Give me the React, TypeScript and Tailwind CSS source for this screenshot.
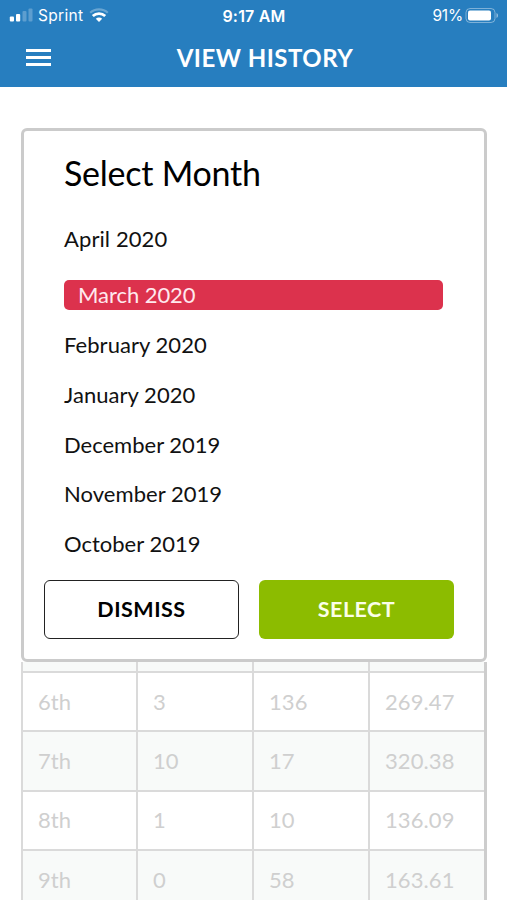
import { useState } from 'react';

type Month = {
  label: string;
  tracking: string;
};

const months: Month[] = [
  { label: 'April 2020', tracking: 'tracking-[0.1px]' },
  { label: 'March 2020', tracking: 'tracking-[-0.05px]' },
  { label: 'February 2020', tracking: 'tracking-[0.05px]' },
  { label: 'January 2020', tracking: 'tracking-[0.05px]' },
  { label: 'December 2019', tracking: 'tracking-[0px]' },
  { label: 'November 2019', tracking: 'tracking-[0.05px]' },
  { label: 'October 2019', tracking: 'tracking-[0px]' },
];

const rows = [
  ['6th', '3', '136', '269.47'],
  ['7th', '10', '17', '320.38'],
  ['8th', '1', '10', '136.09'],
  ['9th', '0', '58', '163.61'],
];

function StatusBar() {
  return (
    <div className="grid h-[31px] grid-cols-3 items-center pr-[8px] pl-[9px] font-['Inter',sans-serif] text-[15.5px] leading-none text-white">
      <div className="flex items-center">
        <svg width="25" height="16" viewBox="0 0 25 16" fill="#fff">
          <rect x="0.8" y="8.5" width="4.2" height="5" rx="1" />
          <rect x="7" y="6" width="4.2" height="7.5" rx="1" />
          <rect x="13.5" y="3" width="4" height="10.5" rx="1" opacity="0.25" />
          <rect x="19.5" y="0.5" width="4" height="13" rx="1" opacity="0.25" />
        </svg>
        <span className="ml-[4px] tracking-[0.3px]">Sprint</span>
        <svg className="ml-[6px]" width="20" height="16" viewBox="0 0 20 16" fill="none" stroke="#fff">
          <path d="M1.2 4.7C6 .2 14 .2 18.8 4.7" strokeWidth="2.2" opacity="0.3" />
          <path d="M3.8 8C7.3 4.7 12.7 4.7 16.2 8" strokeWidth="2.8" />
          <path d="M10 14l3.2-3.3c-1.8-1.6-4.6-1.6-6.4 0z" fill="#fff" stroke="none" />
        </svg>
      </div>
      <span className="text-center text-[16px] font-semibold tracking-[0.2px]">9:17 AM</span>
      <div className="flex items-center justify-end">
        <span className="tracking-[-0.2px]">91%</span>
        <svg className="ml-[2px]" width="34" height="16" viewBox="0 0 34 16">
          <rect x="1" y="0.5" width="29" height="14" rx="4" fill="none" stroke="#fff" opacity="0.4" />
          <rect x="3" y="2.5" width="23" height="10" rx="2" fill="#fff" />
          <path d="M31.5 5c2 .8 2 4.2 0 5z" fill="#fff" opacity="0.5" />
        </svg>
      </div>
    </div>
  );
}

function Header() {
  return (
    <header className="h-[87px] shrink-0 bg-[#277ebf]">
      <StatusBar />
      <div className="grid h-[53px] grid-cols-[72px_1fr_50px] items-center">
        <button className="ml-[26px] flex w-[25px] flex-col gap-[4px]">
          <span className="h-[3px] bg-white" />
          <span className="h-[3px] bg-white" />
          <span className="h-[3px] bg-white" />
        </button>
        <h1 className="pl-[1px] text-center text-[24px] font-bold tracking-[0.5px] whitespace-nowrap text-white">
          VIEW HISTORY
        </h1>
      </div>
    </header>
  );
}

export default function App() {
  const [selected, setSelected] = useState('March 2020');

  return (
    <div className="flex h-[900px] w-[507px] flex-col overflow-hidden bg-white font-['Lato',sans-serif]">
      <Header />

      <section className="mt-[41px] ml-[21px] flex h-[534px] w-[466px] shrink-0 flex-col rounded-[6px] border-3 border-[#cbcbcb] bg-white">
        <h2 className="mt-[21px] ml-[40px] text-[34px] leading-[42px] tracking-[-0.25px] text-black">Select Month</h2>
        <ul className="mt-[29px] mr-[41px] ml-[40px] flex flex-col gap-[19.8px] text-[22px] text-[#111]">
          {months.map((month) => (
            <li key={month.label} className={selected === month.label ? 'mt-[7px]' : ''}>
              <button
                onClick={() => setSelected(month.label)}
                className={`flex h-[30px] w-full items-center text-left ${month.tracking} ${
                  selected === month.label ? 'rounded-[5px] bg-[#dc324d] pb-[1px] pl-[14px] text-[#ffe9ee]' : ''
                }`}
              >
                {month.label}
              </button>
            </li>
          ))}
        </ul>
        <div className="mt-auto mb-[20px] ml-[20px] flex gap-[20px] text-[21.5px] font-bold tracking-[0.5px]">
          <button className="h-[59px] w-[195px] rounded-[6px] border-[1.5px] border-[#222] text-black">DISMISS</button>
          <button className="h-[59px] w-[195px] rounded-[6px] bg-[#8cbc00] text-[#fbffe9]">SELECT</button>
        </div>
      </section>

      {/* table dimmed behind the dialog */}
      <div className="ml-[21px] w-[466px] shrink-0 border-r-3 border-l-2 border-r-[#cdcdcd] border-l-[#dadada] text-[22px] text-[#cfcfcf]">
        <div className="grid h-[11px] grid-cols-[115px_116px_116px_114px] border-b-2 border-[#dadada] bg-[#f8faf9]">
          <span className="border-r-2 border-[#dadada]" />
          <span className="border-r-2 border-[#dadada]" />
          <span className="border-r-2 border-[#dadada]" />
        </div>
        {rows.map((row, i) => (
          <div
            key={row[0]}
            className={`grid h-[59.33px] grid-cols-[115px_116px_116px_114px] border-b-2 border-[#dadada] ${i % 2 ? 'bg-[#f8faf9]' : 'bg-white'}`}
          >
            {row.map((cell, j) => (
              <span
                key={j}
                className={`flex items-center pb-[1px] pl-[15px] tracking-[0.1px] ${j < 3 ? 'border-r-2 border-[#dadada]' : ''}`}
              >
                {cell}
              </span>
            ))}
          </div>
        ))}
      </div>
    </div>
  );
}
